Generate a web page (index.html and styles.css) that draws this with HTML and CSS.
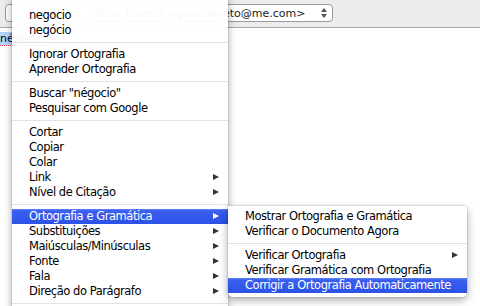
FILE: index.html
```html
<!DOCTYPE html>
<html>
  <head>
    <meta charset="utf-8">
    <title>Mail</title>
    <link rel="stylesheet" href="styles.css">
  </head>
  <body>
    <div class="toolbar">
      <div class="select">
        <span class="label">De:</span>
        <span class="sep"></span>
        <span class="value">Gino Oliveto &lt;gino.oliveto@me.com&gt;</span>
        <svg class="stepper" width="6" height="10" viewBox="0 0 6 10"><path d="M0 4 L3 0 L6 4 Z M0 6 L3 10 L6 6 Z" fill="#555"/></svg>
      </div>
    </div>
    <div class="body">
      <span class="word"><span class="sel">négo</span>cio</span>
    </div>

    <div class="menu main">
      <div class="item">negocio</div>
      <div class="item">negócio</div>
      <div class="divider"></div>
      <div class="item">Ignorar Ortografia</div>
      <div class="item">Aprender Ortografia</div>
      <div class="divider"></div>
      <div class="item">Buscar "négocio"</div>
      <div class="item">Pesquisar com Google</div>
      <div class="divider"></div>
      <div class="item">Cortar</div>
      <div class="item">Copiar</div>
      <div class="item">Colar</div>
      <div class="item sub">Link</div>
      <div class="item sub">Nível de Citação</div>
      <div class="divider"></div>
      <div class="item sub active">Ortografia e Gramática</div>
      <div class="item sub">Substituições</div>
      <div class="item sub">Maiúsculas/Minúsculas</div>
      <div class="item sub">Fonte</div>
      <div class="item sub">Fala</div>
      <div class="item sub">Direção do Parágrafo</div>
      <div class="divider"></div>
    </div>

    <div class="menu submenu">
      <div class="item">Mostrar Ortografia e Gramática</div>
      <div class="item">Verificar o Documento Agora</div>
      <div class="divider"></div>
      <div class="item sub">Verificar Ortografia</div>
      <div class="item">Verificar Gramática com Ortografia</div>
      <div class="item active">Corrigir a Ortografia Automaticamente</div>
    </div>
  </body>
</html>
```

FILE: styles.css
```css
* {
  box-sizing: border-box;
}

body {
  margin: 0;
  width: 480px;
  height: 306px;
  overflow: hidden;
  position: relative;
  background: #fff;
  font-family: "DejaVu Sans", sans-serif;
  font-size: 11px;
  color: #000;
}

.toolbar {
  height: 28px;
  background: #ececec;
  border-bottom: 1px solid #a8a8a8;
  padding: 4px 0 0 5px;
}

.select {
  width: 328px;
  height: 18px;
  background: #fff;
  border: 1px solid #9a9a9a;
  border-radius: 4px;
  display: flex;
  align-items: center;
  padding-left: 58px;
  color: #222;
}

.select .label {
  color: #999;
}

.select .sep {
  width: 1px;
  height: 14px;
  background: #ccc;
  margin: 0 6px;
}

.select .value {
  flex: 1;
  white-space: nowrap;
}

.select .stepper {
  margin-right: 5px;
}

.body {
  padding: 4px 0 0 0;
}

.word {
  border-bottom: 1px dotted #e33;
}

.sel {
  background: #b5d5ff;
}

.menu {
  position: absolute;
  background: rgba(255, 255, 255, 0.96);
  box-shadow: 0 3px 8px rgba(0, 0, 0, 0.35), 0 0 0 1px rgba(0, 0, 0, 0.08);
  font-size: 11.5px;
  letter-spacing: -0.45px;
}

.main {
  left: 12px;
  top: -4px;
  width: 216px;
  padding: 12px 0 20px;
}

.submenu {
  left: 228px;
  top: 206px;
  width: 239px;
  padding: 3px 0 4px;
  border-radius: 0 4px 5px 5px;
}

.item {
  height: 15px;
  line-height: 15px;
  padding-left: 17px;
  white-space: nowrap;
  position: relative;
}

.item.sub::after {
  content: "";
  position: absolute;
  right: 9px;
  top: 4px;
  border-left: 6px solid #333;
  border-top: 3.5px solid transparent;
  border-bottom: 3.5px solid transparent;
}

.item.active {
  color: #fff;
  background: linear-gradient(#6486f4, #3a5ff0 12%, #2c51e6);
}

.item.active::after {
  border-left-color: #fff;
}

.divider {
  height: 9px;
  display: flex;
  align-items: center;
}

.divider::before {
  content: "";
  flex: 1;
  height: 1px;
  background: #e2e2e2;
}
```
